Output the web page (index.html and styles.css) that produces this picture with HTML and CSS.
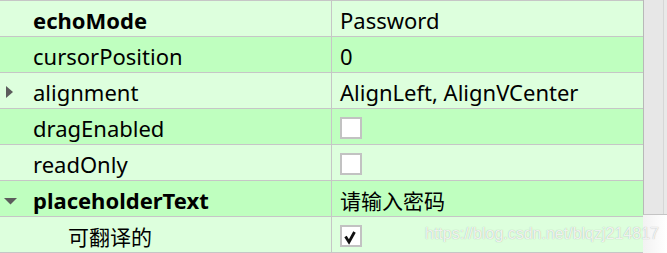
FILE: index.html
```html
<!DOCTYPE html>
<html>
<head>
<meta charset="utf-8">
<link rel="stylesheet" href="styles.css">
</head>
<body>
<div class="editor">
  <div class="table">
    <div class="row light">
      <div class="name"><span class="slot"></span><span class="bold">echoMode</span></div>
      <div class="value">Password</div>
    </div>
    <div class="row dark">
      <div class="name"><span class="slot"></span><span>cursorPosition</span></div>
      <div class="value">0</div>
    </div>
    <div class="row light">
      <div class="name"><span class="slot"><svg width="33" height="35" viewBox="0 0 33 35"><polygon points="6,13 13,19 6,25" fill="#5c5c5c"/></svg></span><span>alignment</span></div>
      <div class="value">AlignLeft, AlignVCenter</div>
    </div>
    <div class="row dark">
      <div class="name"><span class="slot"></span><span>dragEnabled</span></div>
      <div class="value"><span class="check"></span></div>
    </div>
    <div class="row light">
      <div class="name"><span class="slot"></span><span>readOnly</span></div>
      <div class="value"><span class="check"></span></div>
    </div>
    <div class="row dark">
      <div class="name"><span class="slot"><svg width="33" height="35" viewBox="0 0 33 35"><polygon points="4,17 17,17 10.5,23.5" fill="#5c5c5c"/></svg></span><span class="bold">placeholderText</span></div>
      <div class="value"><span class="cjk">请输入密码</span></div>
    </div>
    <div class="row light">
      <div class="name child"><span class="slot"></span><span class="cjk">可翻译的</span></div>
      <div class="value"><span class="check"><svg width="18" height="18" viewBox="0 0 18 18"><path d="M3.5 9.5 L7 15 L12.5 5" fill="none" stroke="#111" stroke-width="2.8" stroke-linejoin="miter"/></svg></span></div>
    </div>
  </div>
  <div class="side">
    <div class="vscroll"></div>
    <div class="corner"></div>
  </div>
  <div class="watermark">https://blog.csdn.net/blqzj214817</div>
</div>
</body>
</html>
```
FILE: styles.css
```css
html, body {
  margin: 0;
  padding: 0;
  background: #ffffff;
}
body {
  width: 667px;
  height: 253px;
  overflow: hidden;
  font-family: "Noto Sans", "Noto Sans CJK SC", sans-serif;
  font-size: 22px;
  color: #000;
}
.editor {
  position: relative;
  display: flex;
  width: 667px;
  height: 253px;
}
.table {
  width: 643px;
  border-top: 1px solid #c6c6c6;
}
.row {
  display: flex;
  height: 35px;
  border-bottom: 1px solid #c6c6c6;
}
.row.light { background: #ddffdd; }
.row.dark { background: #bfffbf; }
.name {
  width: 331px;
  border-right: 1px solid #c6c6c6;
  display: flex;
  align-items: center;
  white-space: nowrap;
}
.name.child { padding-left: 35px; width: 296px; }
.name > span:last-child,
.value {
  padding-top: 2px;
}
.slot {
  width: 33px;
  height: 35px;
  flex: none;
  display: block;
  padding-top: 0 !important;
}
.slot svg { display: block; }
.bold { font-weight: 700; }
.cjk {
  font-family: "Noto Sans CJK SC", sans-serif;
  font-size: 21px;
}
.value {
  flex: 1;
  padding-left: 8px;
  display: flex;
  align-items: center;
  white-space: nowrap;
}
.check {
  width: 18px;
  height: 18px;
  border: 2px solid #c2c2c2;
  background: #ffffff;
  display: block;
  margin-top: 0;
}
.check svg { display: block; }
.side {
  width: 24px;
  display: flex;
  flex-direction: column;
}
.vscroll {
  height: 214px;
  background: #e7e7e7;
  border-left: 1px solid #b8b8b8;
  border-bottom: 1px solid #c4c4c4;
  box-shadow: inset -3px 0 0 #e9e9e9, inset -4px 0 0 #d6d6d6;
}
.corner {
  flex: 1;
  background: linear-gradient(to right, #f2f2f2, #ffffff);
}
.watermark {
  position: absolute;
  left: 425px;
  top: 224px;
  font-family: "Liberation Sans", Arial, sans-serif;
  font-size: 16px;
  line-height: 20px;
  color: rgba(250, 250, 250, 0.9);
  text-shadow: 0 0 1px rgba(110, 110, 110, 0.55);
  white-space: nowrap;
}
```
